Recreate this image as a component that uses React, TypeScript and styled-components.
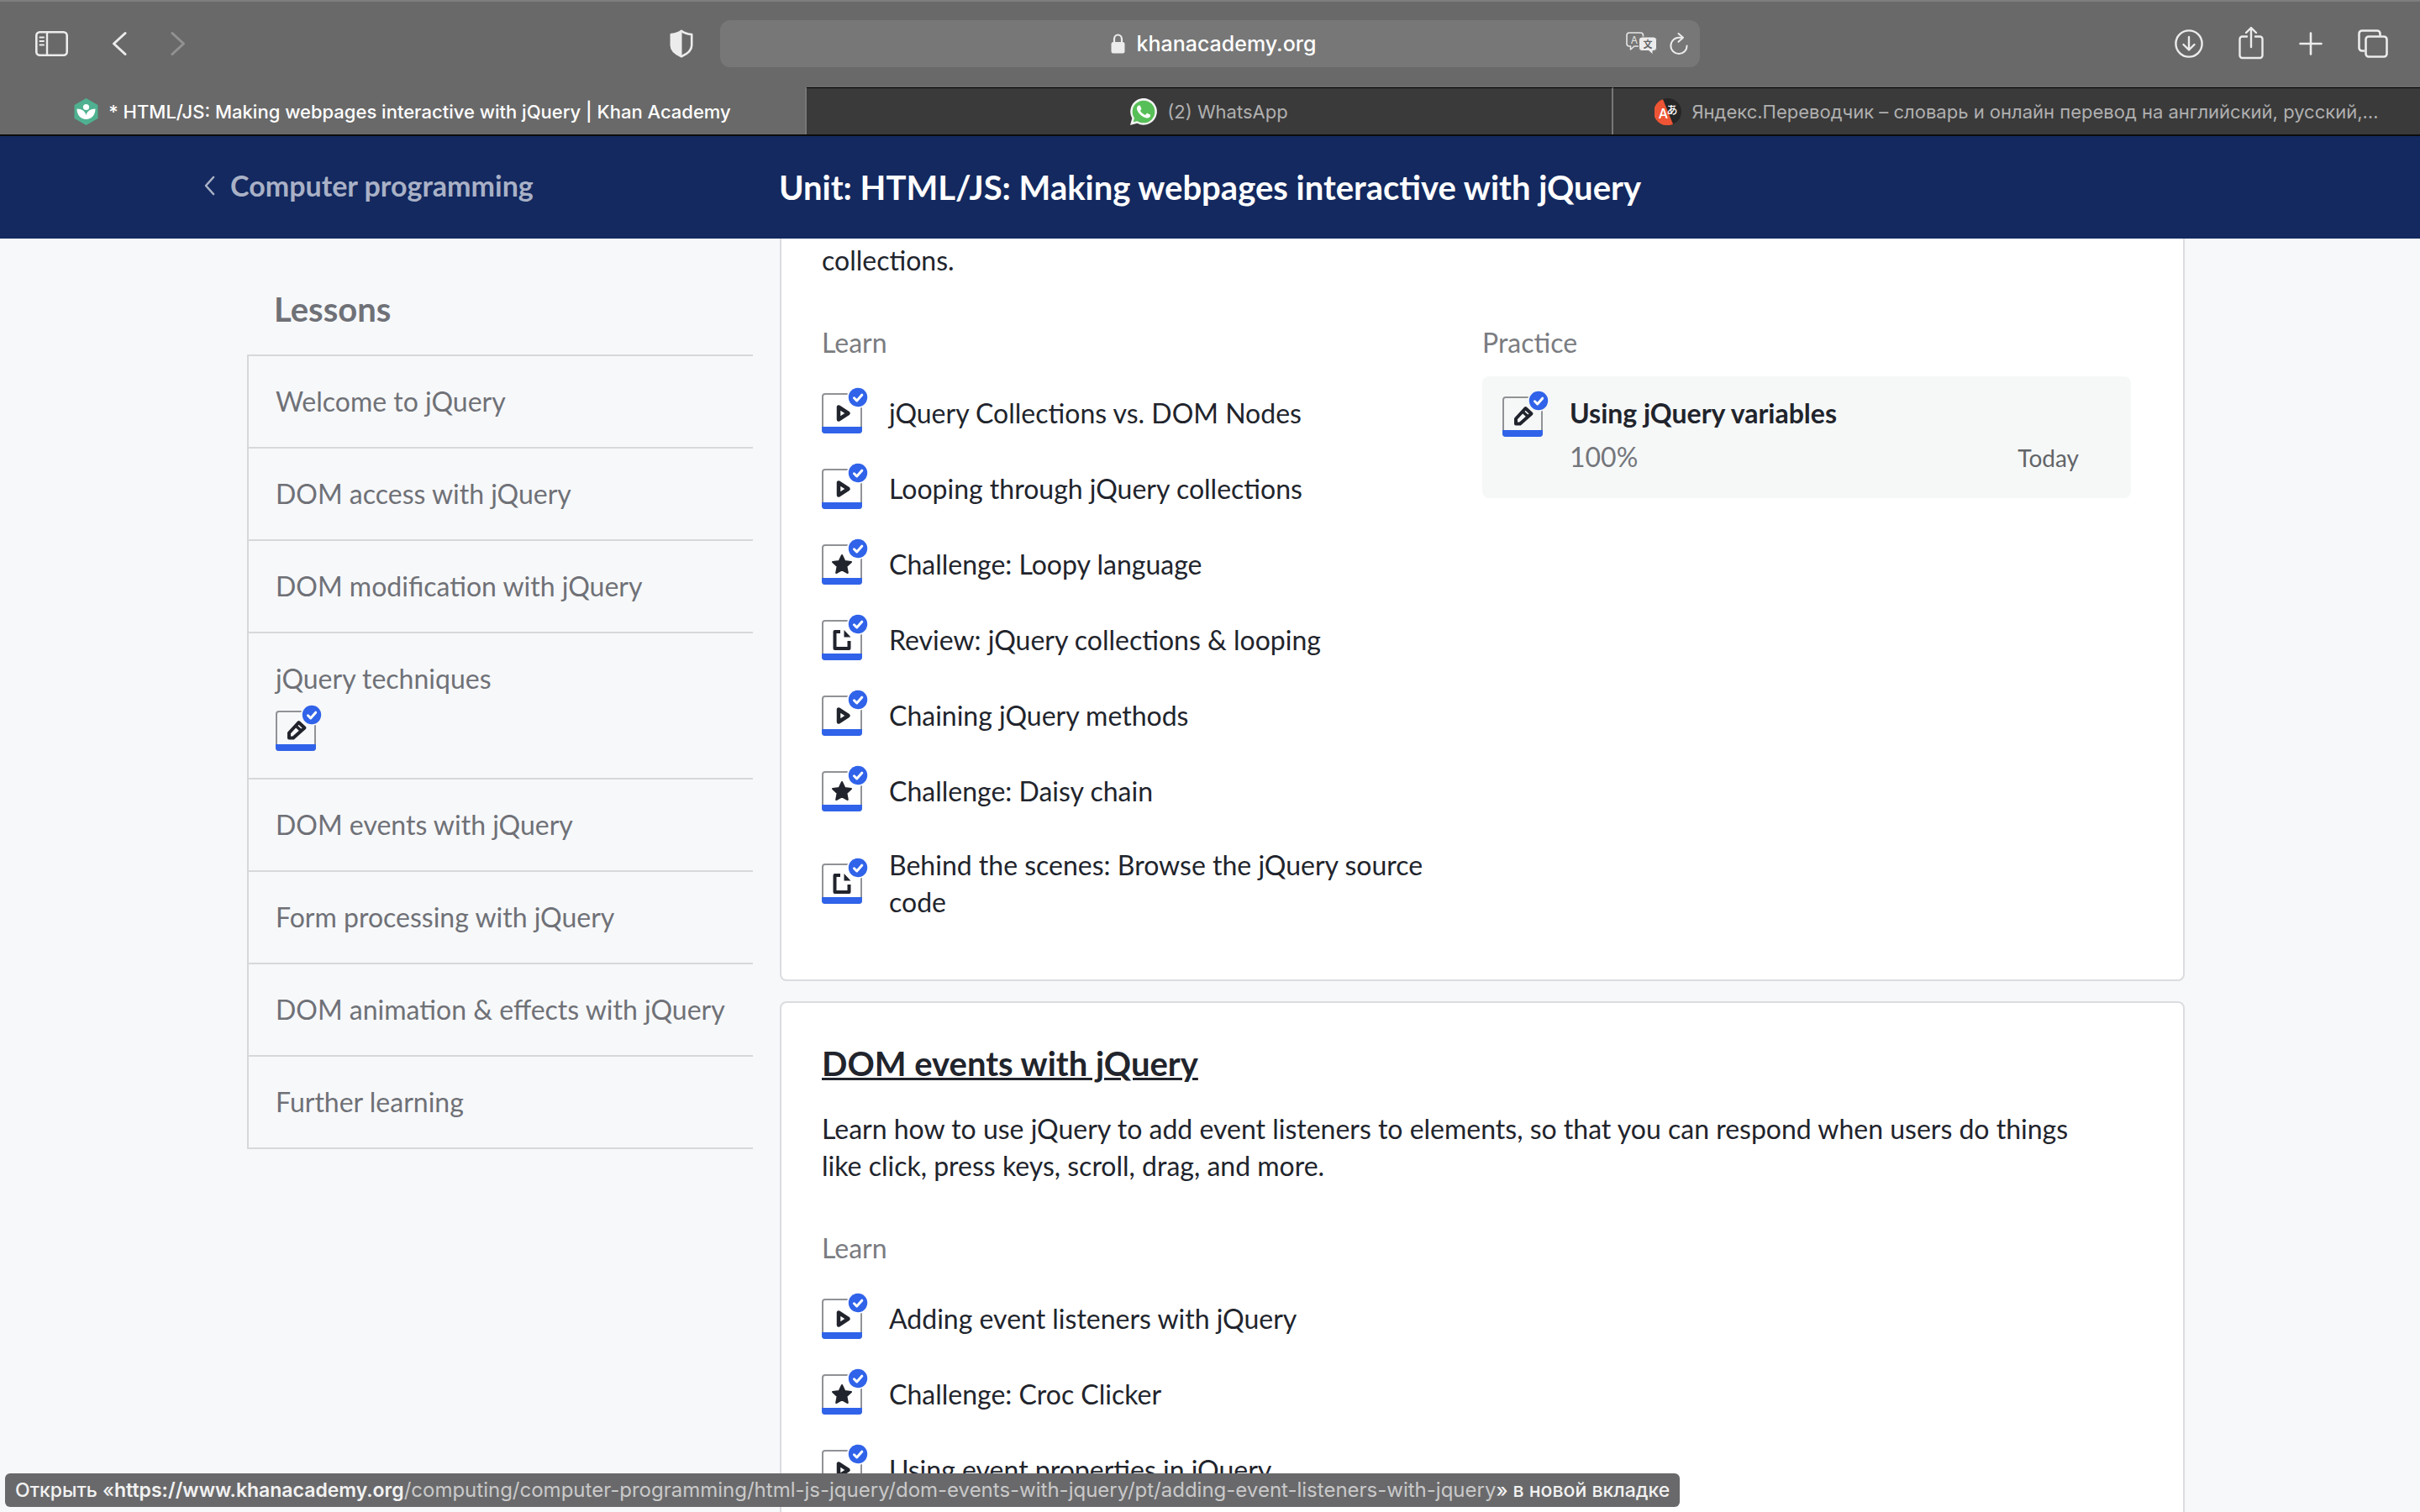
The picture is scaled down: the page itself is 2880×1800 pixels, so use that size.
import React from "react";
import styled, { createGlobalStyle } from "styled-components";

const GlobalStyle = createGlobalStyle`
  *, *::before, *::after { box-sizing: border-box; }
  body { margin: 0; background: #f7f8fa; }
  h1, h2, h3, p, ul { margin: 0; padding: 0; }
  ul { list-style: none; }
  svg { display: block; flex: none; }
`;

const uiFont = `Inter, "Noto Sans CJK JP", "Liberation Sans", sans-serif`;
const pageFont = `Lato, "Noto Sans", sans-serif`;

const Window = styled.div`
  height: 100vh;
  display: flex;
  flex-direction: column;
  overflow: hidden;
  background: #f7f8fa;
  color: #21242c;
  font-family: ${pageFont};
`;

/* Browser chrome */

const Toolbar = styled.header`
  flex: none;
  height: 104px;
  display: grid;
  grid-template-columns: 1fr minmax(0, 1166px) 1fr;
  align-items: center;
  padding-bottom: 2px;
  border-top: 2px solid #7e7e7e;
  background: #696969;
  font-family: ${uiFont};
`;

const ToolbarStart = styled.div`
  display: flex;
  align-items: center;
  justify-content: space-between;
  padding: 0 32px 0 42px;
`;

const NavButtons = styled.div`
  display: flex;
  align-items: center;
  gap: 52px;
`;

const ToolbarEnd = styled.div`
  display: flex;
  align-items: center;
  justify-content: flex-end;
  gap: 42px;
  padding-right: 38px;
`;

const IconButton = styled.button<{ $dim?: boolean }>`
  display: flex;
  padding: 0;
  border: 0;
  background: none;
  color: ${(p) => (p.$dim ? "#929292" : "#ececec")};
`;

const AddressBar = styled.div`
  height: 56px;
  display: grid;
  grid-template-columns: 1fr auto 1fr;
  align-items: center;
  border-radius: 12px;
  padding: 0 14px 0 24px;
  background: #777777;
  color: #ececec;
`;

const AddressField = styled.label`
  grid-column: 2;
  display: flex;
  align-items: center;
  gap: 14px;
`;

const AddressInput = styled.input`
  width: 216px;
  height: 32px;
  padding: 0;
  border: 0;
  outline: 0;
  background: none;
  color: #ffffff;
  font: 500 25px/32px ${uiFont};
`;

const AddressActions = styled.div`
  display: flex;
  align-items: center;
  justify-content: flex-end;
  gap: 14px;
`;

const TabBar = styled.nav`
  flex: none;
  height: 58px;
  display: grid;
  grid-template-columns: repeat(3, 1fr);
  border-bottom: 2px solid #0c0c0c;
  font-family: ${uiFont};
`;

const Tab = styled.a<{ $active?: boolean }>`
  min-width: 0;
  display: flex;
  align-items: center;
  justify-content: center;
  gap: 12px;
  padding: 0 48px;
  border-top: 1px solid ${(p) => (p.$active ? "#696969" : "#000000")};
  border-right: 2px solid #777777;
  background: ${(p) => (p.$active ? "#696969" : "#3a3a3a")};
  color: ${(p) => (p.$active ? "#ffffff" : "#b0b0b0")};
  font-size: 22px;
  font-weight: ${(p) => (p.$active ? 500 : 400)};
  line-height: 32px;
  text-decoration: none;
  white-space: nowrap;

  &:last-child {
    border-right: 0;
  }
`;

/* Unit header */

const UnitHeader = styled.div`
  flex: none;
  height: 122px;
  display: grid;
  grid-template-columns: 1fr auto 1fr;
  align-items: center;
  padding: 0 243px;
  background: #13295f;
`;

const BackLink = styled.a`
  display: flex;
  align-items: center;
  gap: 18px;
  padding-bottom: 4px;
  color: #a9b1c6;
  font-size: 34px;
  font-weight: 700;
  line-height: 40px;
  text-decoration: none;
`;

const UnitTitle = styled.h1`
  color: #ffffff;
  font-size: 40px;
  line-height: 48px;
`;

/* Page body */

const Content = styled.main`
  flex: 1;
  min-height: 0;
  display: grid;
  grid-template-columns: 602px minmax(0, 1fr);
  align-items: start;
  gap: 32px;
  padding: 0 280px 0 294px;
  overflow-y: auto;
  scrollbar-width: none;
`;

const Sidebar = styled.aside`
  padding-top: 60px;
`;

const SidebarTitle = styled.h2`
  padding-left: 32px;
  margin-bottom: 30px;
  color: #6f7177;
  font-size: 40px;
  line-height: 48px;
`;

const LessonList = styled.ul`
  border: 2px solid #d6d8da;
  border-width: 0 0 2px 2px;
`;

const LessonLink = styled.a`
  display: flex;
  flex-direction: column;
  gap: 16px;
  padding: 32px;
  border-top: 2px solid #d6d8da;
  color: #6f7177;
  font-size: 32px;
  line-height: 44px;
  text-decoration: none;
  white-space: nowrap;
`;

const Cards = styled.div`
  display: flex;
  flex-direction: column;
  gap: 24px;
`;

const Card = styled.section<{ $continued?: boolean }>`
  padding: ${(p) => (p.$continued ? "4px 62px 49px 48px" : "48px 62px 49px 48px")};
  border: 2px solid #dbdcdf;
  border-top-width: ${(p) => (p.$continued ? "0" : "2px")};
  border-radius: ${(p) => (p.$continued ? "0 0 8px 8px" : "8px")};
  background: #ffffff;
`;

const CardTitle = styled.h2`
  margin-bottom: 32px;
  font-size: 40px;
  line-height: 48px;
`;

const TitleLink = styled.a`
  color: #21242c;
  text-decoration: underline;
  text-decoration-thickness: 3px;
`;

const Description = styled.p`
  margin-bottom: 54px;
  padding-right: 48px;
  font-size: 32px;
  line-height: 44px;
`;

const Columns = styled.div`
  display: grid;
  grid-template-columns: 1fr 1fr;
  gap: 14px;
`;

const ColumnTitle = styled.h3`
  margin-bottom: 17px;
  color: #7a7c81;
  font-size: 32px;
  font-weight: 400;
  line-height: 44px;
`;

const ItemLink = styled.a`
  min-height: 90px;
  display: flex;
  align-items: center;
  gap: 32px;
  padding: 21px 14px 21px 0;
  color: #21242c;
  font-size: 32px;
  line-height: 44px;
  text-decoration: none;
`;

const PracticeCard = styled.a`
  display: flex;
  align-items: flex-start;
  gap: 32px;
  margin-top: 18px;
  padding: 22px 62px 26px 24px;
  border-radius: 8px;
  background: #f6f8f8;
  color: #21242c;
  font-size: 32px;
  line-height: 44px;
  text-decoration: none;
`;

const PracticeIcon = styled.span`
  padding-top: 2px;
`;

const PracticeBody = styled.div`
  flex: 1;
  display: flex;
  flex-direction: column;
  gap: 8px;
`;

const PracticeName = styled.span`
  font-weight: 700;
`;

const PracticeResult = styled.div`
  display: flex;
  align-items: baseline;
  justify-content: space-between;
  color: #74767b;
`;

const PracticeDate = styled.span`
  color: #626569;
  font-size: 28px;
`;

const TypeIconSvg = styled.svg`
  overflow: visible;
`;

const StatusBar = styled.div`
  position: fixed;
  left: 6px;
  bottom: 6px;
  height: 40px;
  padding: 0 12px;
  border-radius: 6px;
  background: #69696b;
  color: #f2f2f2;
  font: 500 23px/40px ${uiFont};
  white-space: pre;
`;

const StatusHost = styled.span`
  font-weight: 600;
`;

const StatusPath = styled.span`
  color: #c9c9ca;
  font-size: 24px;
  font-weight: 400;
`;

/* Icons */

type Kind = "video" | "challenge" | "article" | "exercise";

const glyphs: Record<Kind, React.ReactNode> = {
  video: (
    <path d="M20 16.500v15L31.500 24z" fill="none" stroke="#21242c" strokeWidth="4.500" strokeLinejoin="round" />
  ),
  challenge: (
    <path
      d="M24 13l3.300 7 7.700 1-5.600 5.300 1.400 7.700-6.800-3.700-6.800 3.700 1.400-7.700L13 21l7.700-1z"
      fill="#21242c"
      stroke="#21242c"
      strokeWidth="2"
      strokeLinejoin="round"
    />
  ),
  article: (
    <>
      <path d="M22 14h-6.500v20h17V25" fill="none" stroke="#21242c" strokeWidth="4" strokeLinejoin="round" />
      <path d="M26.500 12v8.500h8z" fill="#21242c" />
    </>
  ),
  exercise: (
    <>
      <path
        d="M27.500 14l7 6.500-13.500 12H16v-6z"
        fill="none"
        stroke="#21242c"
        strokeWidth="4"
        strokeLinejoin="round"
      />
      <path d="M23.500 17.500l7 6.500" stroke="#21242c" strokeWidth="3.500" />
    </>
  ),
};

function TypeIcon({ kind, backdrop = "#ffffff" }: { kind: Kind; backdrop?: string }) {
  return (
    <TypeIconSvg width="48" height="48" viewBox="0 0 48 48" aria-hidden="true">
      <rect x="1" y="1" width="46" height="46" rx="3" fill={backdrop} stroke="#909296" strokeWidth="2" />
      <path d="M0 40h48v4a4 4 0 0 1-4 4H4a4 4 0 0 1-4-4z" fill="#3063e9" />
      {glyphs[kind]}
      <circle cx="43" cy="5" r="13" fill={backdrop} />
      <circle cx="43" cy="5" r="11.200" fill="#3063e9" />
      <path d="M38.500 5.800l3.200 3.200 6-6.800" fill="none" stroke="#ffffff" strokeWidth="3" strokeLinecap="round" strokeLinejoin="round" />
    </TypeIconSvg>
  );
}

const SidebarIcon = () => (
  <svg width="39" height="30" viewBox="0 0 39 30" fill="none" stroke="currentColor">
    <rect x="1.300" y="1.300" width="36.400" height="27.400" rx="4" strokeWidth="2.600" />
    <path d="M14 2v26" strokeWidth="2.400" />
    <path d="M5.500 7.500h4.500M5.500 12h4.500M5.500 16.500h4.500" strokeWidth="2" strokeLinecap="round" />
  </svg>
);

const ChevronIcon = ({ flip }: { flip?: boolean }) => (
  <svg width="18" height="30" viewBox="0 0 18 30" fill="none" stroke="currentColor" strokeWidth="3" strokeLinecap="round" strokeLinejoin="round">
    <path d={flip ? "M2 2.500L15.500 15 2 27.500" : "M16 2.500L2.500 15 16 27.500"} />
  </svg>
);

const ShieldIcon = () => (
  <svg width="28" height="34" viewBox="0 0 28 34">
    <path d="M14 1.800C11 4.500 7 5.600 1.800 6v13c0 6.500 4.700 10 12.200 13.200C21.500 29 26.200 25.500 26.200 19V6C21 5.600 17 4.500 14 1.800z" fill="none" stroke="currentColor" strokeWidth="2.600" strokeLinejoin="round" />
    <path d="M14.500 1.800C11 4.500 7 5.600 1.800 6v13c0 6.500 4.700 10 12.700 13.200z" fill="currentColor" />
  </svg>
);

const LockIcon = () => (
  <svg width="17" height="24" viewBox="0 0 17 24">
    <rect x="0.500" y="10" width="16" height="13.500" rx="2.500" fill="currentColor" />
    <path d="M4 11V6.500a4.500 5 0 0 1 9 0V11" fill="none" stroke="currentColor" strokeWidth="2.200" />
  </svg>
);

const TranslateIcon = () => (
  <svg width="38" height="28" viewBox="0 0 38 28" fontFamily={uiFont}>
    <path d="M4 1h13.500a3 3 0 0 1 3 3v10a3 3 0 0 1-3 3H10l-4.500 4v-4H4a3 3 0 0 1-3-3V4a3 3 0 0 1 3-3z" fill="none" stroke="#e6e6e6" strokeWidth="1.600" strokeLinejoin="round" />
    <text x="10" y="13.500" fontSize="12" fill="#e6e6e6" textAnchor="middle">A</text>
    <path d="M19 6h14a3.500 3.500 0 0 1 3.500 3.500v9.500a3.500 3.500 0 0 1-3.500 3.500h-1V27l-5-4.500h-8a3.500 3.500 0 0 1-3.500-3.500V9.500A3.500 3.500 0 0 1 19 6z" fill="#ececec" stroke="#777777" strokeWidth="1" />
    <text x="26" y="18.500" fontSize="11" fontWeight="700" fill="#666666" textAnchor="middle">文</text>
  </svg>
);

const ReloadIcon = () => (
  <svg width="22" height="28" viewBox="0 0 22 28" fill="none" stroke="currentColor" strokeWidth="2" strokeLinecap="round" strokeLinejoin="round">
    <path d="M15 6.800L11 6.800a9.600 9.600 0 1 0 9.600 9.600" />
    <path d="M10.500 2l5.500 4.800-5.500 5" />
  </svg>
);

const DownloadIcon = () => (
  <svg width="34" height="34" viewBox="0 0 34 34" fill="none" stroke="currentColor" strokeWidth="2.400" strokeLinecap="round" strokeLinejoin="round">
    <circle cx="17" cy="17" r="15.600" />
    <path d="M17 9v15M10.500 18l6.500 6.500 6.500-6.500" />
  </svg>
);

const ShareIcon = () => (
  <svg width="30" height="42" viewBox="0 0 30 42" fill="none" stroke="currentColor" strokeWidth="2.400" strokeLinecap="round" strokeLinejoin="round">
    <path d="M10 12.500H4.500a3 3 0 0 0-3 3v19.500a3 3 0 0 0 3 3h21a3 3 0 0 0 3-3V15.500a3 3 0 0 0-3-3H20" />
    <path d="M15 25V2.500M9 8l6-6 6 6" />
  </svg>
);

const PlusIcon = () => (
  <svg width="28" height="28" viewBox="0 0 28 28" stroke="currentColor" strokeWidth="2.600" strokeLinecap="round">
    <path d="M14 1.500v25M1.500 14h25" />
  </svg>
);

const TabsIcon = () => (
  <svg width="36" height="34" viewBox="0 0 36 34" fill="none" stroke="currentColor" strokeWidth="2.600" strokeLinejoin="round">
    <path d="M8 25.500H5a3.500 3.500 0 0 1-3.500-3.500V5A3.500 3.500 0 0 1 5 1.500h18A3.500 3.500 0 0 1 26.500 5v2.500" />
    <rect x="9.500" y="8.500" width="25" height="24" rx="3.500" />
  </svg>
);

const KhanIcon = () => (
  <svg width="29" height="32" viewBox="0 0 29 32">
    <path d="M14.500 1l13 7.500v15l-13 7.500-13-7.500v-15z" fill="#4fb191" stroke="#4fb191" strokeWidth="2" strokeLinejoin="round" />
    <circle cx="14.500" cy="10.500" r="3.600" fill="#ffffff" />
    <path d="M3.500 12.500c6 0 10 3 11 7.500 1-4.500 5-7.500 11-7.500 0 7.500-4.500 12.500-11 12.500s-11-5-11-12.500z" fill="#ffffff" />
  </svg>
);

const WhatsAppIcon = () => (
  <svg width="32" height="32" viewBox="0 0 24 24">
    <path d="M0 24l1.700-6.200A11.900 11.900 0 1 1 6.300 22.300z" fill="#f4f4f4" />
    <circle cx="12" cy="12" r="10" fill="#57bf57" />
    <path d="M2.800 21.200l1-4 3 3z" fill="#57bf57" />
    <path
      d="M17.472 14.382c-.297-.149-1.758-.867-2.030-.967-.273-.099-.471-.148-.670.150-.197.297-.767.966-.940 1.164-.173.199-.347.223-.644.075-.297-.150-1.255-.463-2.390-1.475-.883-.788-1.480-1.761-1.653-2.059-.173-.297-.018-.458.130-.606.134-.133.298-.347.446-.520.149-.174.198-.298.298-.497.099-.198.050-.371-.025-.520-.075-.149-.669-1.612-.916-2.207-.242-.579-.487-.500-.669-.510-.173-.008-.371-.010-.570-.010-.198 0-.520.074-.792.372-.272.297-1.040 1.016-1.040 2.479 0 1.462 1.065 2.875 1.213 3.074.149.198 2.096 3.200 5.077 4.487.709.306 1.262.489 1.694.625.712.227 1.360.195 1.871.118.571-.085 1.758-.719 2.006-1.413.248-.694.248-1.289.173-1.413-.074-.124-.272-.198-.570-.347"
      fill="#ffffff"
    />
  </svg>
);

const YandexIcon = () => (
  <svg width="32" height="32" viewBox="0 0 32 32" fontFamily={uiFont}>
    <circle cx="16" cy="16" r="16" fill="#262626" />
    <path d="M10 1.200A16 16 0 1 0 22 30.800z" fill="#ee5535" />
    <text x="10.500" y="24" fontSize="16" fontWeight="500" fill="#ffffff" textAnchor="middle">A</text>
    <text x="21" y="18" fontSize="13" fontWeight="500" fill="#ffffff" textAnchor="middle">あ</text>
  </svg>
);

const BackChevron = () => (
  <svg width="13" height="24" viewBox="0 0 13 24" fill="none" stroke="currentColor" strokeWidth="2.600" strokeLinecap="round" strokeLinejoin="round">
    <path d="M11 2L2 12l9 10" />
  </svg>
);

/* Data */

const lessons: { name: string; icon?: Kind }[] = [
  { name: "Welcome to jQuery" },
  { name: "DOM access with jQuery" },
  { name: "DOM modification with jQuery" },
  { name: "jQuery techniques", icon: "exercise" },
  { name: "DOM events with jQuery" },
  { name: "Form processing with jQuery" },
  { name: "DOM animation & effects with jQuery" },
  { name: "Further learning" },
];

const techniques: { kind: Kind; name: string }[] = [
  { kind: "video", name: "jQuery Collections vs. DOM Nodes" },
  { kind: "video", name: "Looping through jQuery collections" },
  { kind: "challenge", name: "Challenge: Loopy language" },
  { kind: "article", name: "Review: jQuery collections & looping" },
  { kind: "video", name: "Chaining jQuery methods" },
  { kind: "challenge", name: "Challenge: Daisy chain" },
  { kind: "article", name: "Behind the scenes: Browse the jQuery source code" },
];

const events: { kind: Kind; name: string }[] = [
  { kind: "video", name: "Adding event listeners with jQuery" },
  { kind: "challenge", name: "Challenge: Croc Clicker" },
  { kind: "video", name: "Using event properties in jQuery" },
];

function LearnColumn({ items }: { items: { kind: Kind; name: string }[] }) {
  return (
    <div>
      <ColumnTitle>Learn</ColumnTitle>
      <ul>
        {items.map((item) => (
          <li key={item.name}>
            <ItemLink href="#">
              <TypeIcon kind={item.kind} />
              <span>{item.name}</span>
            </ItemLink>
          </li>
        ))}
      </ul>
    </div>
  );
}

export default function App() {
  return (
    <Window>
      <GlobalStyle />
      <Toolbar>
        <ToolbarStart>
          <NavButtons>
            <IconButton aria-label="Sidebar"><SidebarIcon /></IconButton>
            <IconButton aria-label="Back"><ChevronIcon /></IconButton>
            <IconButton aria-label="Forward" $dim><ChevronIcon flip /></IconButton>
          </NavButtons>
          <IconButton aria-label="Privacy report"><ShieldIcon /></IconButton>
        </ToolbarStart>
        <AddressBar>
          <AddressField>
            <LockIcon />
            <AddressInput aria-label="Address" defaultValue="khanacademy.org" />
          </AddressField>
          <AddressActions>
            <IconButton aria-label="Translate"><TranslateIcon /></IconButton>
            <IconButton aria-label="Reload"><ReloadIcon /></IconButton>
          </AddressActions>
        </AddressBar>
        <ToolbarEnd>
          <IconButton aria-label="Downloads"><DownloadIcon /></IconButton>
          <IconButton aria-label="Share"><ShareIcon /></IconButton>
          <IconButton aria-label="New tab"><PlusIcon /></IconButton>
          <IconButton aria-label="Tab overview"><TabsIcon /></IconButton>
        </ToolbarEnd>
      </Toolbar>
      <TabBar>
        <Tab href="#" $active><KhanIcon />* HTML/JS: Making webpages interactive with jQuery | Khan Academy</Tab>
        <Tab href="#"><WhatsAppIcon />(2) WhatsApp</Tab>
        <Tab href="#"><YandexIcon />Яндекс.Переводчик – словарь и онлайн перевод на английский, русский,…</Tab>
      </TabBar>
      <UnitHeader>
        <BackLink href="#"><BackChevron />Computer programming</BackLink>
        <UnitTitle>Unit: HTML/JS: Making webpages interactive with jQuery</UnitTitle>
      </UnitHeader>
      <Content>
        <Sidebar>
          <SidebarTitle>Lessons</SidebarTitle>
          <LessonList>
            {lessons.map((lesson) => (
              <li key={lesson.name}>
                <LessonLink href="#">
                  {lesson.name}
                  {lesson.icon && <TypeIcon kind={lesson.icon} backdrop="#f7f8fa" />}
                </LessonLink>
              </li>
            ))}
          </LessonList>
        </Sidebar>
        <Cards>
          <Card $continued>
            <Description>collections.</Description>
            <Columns>
              <LearnColumn items={techniques} />
              <div>
                <ColumnTitle>Practice</ColumnTitle>
                <PracticeCard href="#">
                  <PracticeIcon>
                    <TypeIcon kind="exercise" backdrop="#f6f8f8" />
                  </PracticeIcon>
                  <PracticeBody>
                    <PracticeName>Using jQuery variables</PracticeName>
                    <PracticeResult>
                      100%
                      <PracticeDate>Today</PracticeDate>
                    </PracticeResult>
                  </PracticeBody>
                </PracticeCard>
              </div>
            </Columns>
          </Card>
          <Card>
            <CardTitle><TitleLink href="#">DOM events with jQuery</TitleLink></CardTitle>
            <Description>
              Learn how to use jQuery to add event listeners to elements, so that you can respond when users do things
              like click, press keys, scroll, drag, and more.
            </Description>
            <Columns>
              <LearnColumn items={events} />
            </Columns>
          </Card>
        </Cards>
      </Content>
      <StatusBar>
        Открыть «<StatusHost>https://www.khanacademy.org</StatusHost>
        <StatusPath>/computing/computer-programming/html-js-jquery/dom-events-with-jquery/pt/adding-event-listeners-with-jquery</StatusPath>
        » в новой вкладке
      </StatusBar>
    </Window>
  );
}
